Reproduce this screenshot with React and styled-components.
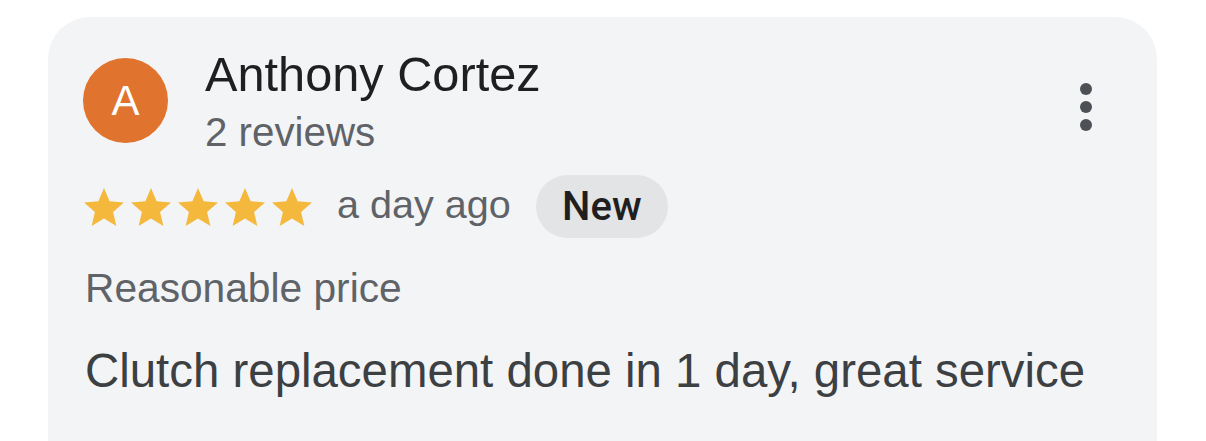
import React from "react";
import styled, { createGlobalStyle } from "styled-components";

const Global = createGlobalStyle`
  html, body { margin: 0; padding: 0; background: #ffffff; overflow: hidden; }
  body { font-family: "Liberation Sans", Arial, sans-serif; }
`;

const Page = styled.div`
  padding: 17px 49px 0 48px;
`;

const Card = styled.div`
  background: #f3f4f6;
  border-radius: 42px;
  min-height: 520px;
  padding: 29px 65px 0 35px;
  box-sizing: border-box;
`;

const Header = styled.div`
  display: flex;
  align-items: flex-start;
`;

const Avatar = styled.div`
  width: 85px;
  height: 85px;
  border-radius: 50%;
  background: #e0732d;
  color: #ffffff;
  display: flex;
  align-items: center;
  justify-content: center;
  font-size: 42px;
  margin-top: 12px;
  flex-shrink: 0;
`;

const Who = styled.div`
  margin-left: 37px;
  display: flex;
  flex-direction: column;
  flex: 1;
`;

const Name = styled.div`
  font-size: 48.7px;
  line-height: 56px;
  color: #1f1f1f;
`;

const Sub = styled.div`
  font-size: 40.3px;
  line-height: 48px;
  color: #5f6368;
  margin-top: 7px;
`;

const More = styled.button`
  border: 0;
  background: transparent;
  padding: 0;
  margin-top: 37px;
  display: flex;
  flex-direction: column;
  gap: 6px;
  cursor: pointer;
`;

const Dot = styled.span`
  width: 12px;
  height: 12px;
  border-radius: 50%;
  background: #4d5156;
`;

const Meta = styled.div`
  display: flex;
  align-items: center;
  margin-top: 18px;
  height: 63px;
`;

const Stars = styled.div`
  display: flex;
  gap: 7px;
  margin-left: 1px;
`;

const Ago = styled.span`
  font-size: 39.6px;
  color: #5f6368;
  margin-left: 25px;
  position: relative;
  top: -2px;
`;

const Pill = styled.span`
  margin-left: 25px;
  height: 63px;
  width: 132px;
  border-radius: 32px;
  background: #e3e4e6;
  display: flex;
  align-items: center;
  justify-content: center;
  font-family: Roboto, "Liberation Sans", sans-serif;
  font-weight: 500;
  font-size: 40px;
  color: #1f1f1f;
`;

const Category = styled.div`
  font-size: 40.7px;
  line-height: 48px;
  color: #5f6368;
  margin-top: 26px;
  margin-left: 2px;
`;

const Body = styled.div`
  font-size: 47.4px;
  line-height: 56px;
  color: #3c4043;
  margin-top: 31px;
  margin-left: 2px;
`;

const Star = () => (
  <svg width="40" height="38" viewBox="2 2 20 19">
    <path
      fill="#f4b93c"
      d="M12 17.27L18.18 21l-1.64-7.03L22 9.24l-7.19-.61L12 2 9.19 8.63 2 9.24l5.46 4.73L5.82 21z"
    />
  </svg>
);

export default function App() {
  return (
    <>
      <Global />
      <Page>
        <Card>
          <Header>
            <Avatar>A</Avatar>
            <Who>
              <Name>Anthony Cortez</Name>
              <Sub>2 reviews</Sub>
            </Who>
            <More aria-label="More options">
              <Dot />
              <Dot />
              <Dot />
            </More>
          </Header>
          <Meta>
            <Stars>
              {[0, 1, 2, 3, 4].map((i) => (
                <Star key={i} />
              ))}
            </Stars>
            <Ago>a day ago</Ago>
            <Pill>New</Pill>
          </Meta>
          <Category>Reasonable price</Category>
          <Body>Clutch replacement done in 1 day, great service</Body>
        </Card>
      </Page>
    </>
  );
}
